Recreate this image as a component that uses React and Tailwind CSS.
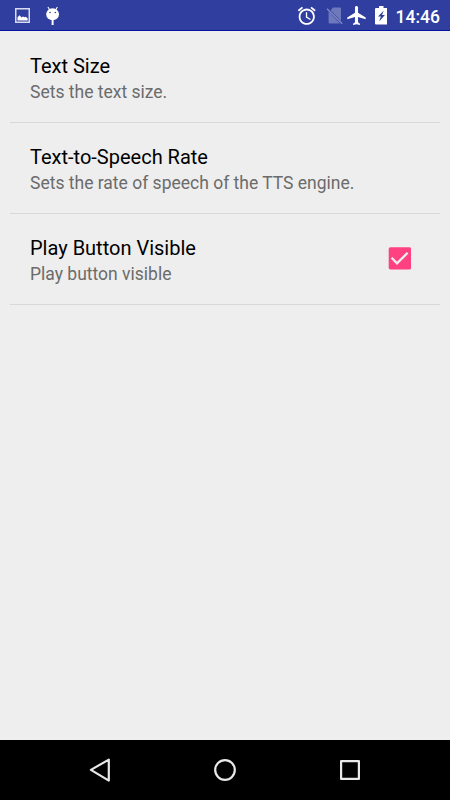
const PREFERENCES = [
  { title: 'Text Size',           summary: 'Sets the text size.' },
  { title: 'Text-to-Speech Rate', summary: 'Sets the rate of speech of the TTS engine.' },
  { title: 'Play Button Visible', summary: 'Play button visible', checked: true },
]

function StatusBar() {
  return (
    <div className="h-[31px] shrink-0 flex items-center justify-between bg-[#303f9f] border-b border-[#0512a0] pl-[15px] pr-[10px] text-white">
      <div className="flex items-center gap-4">
        {/* Screenshot notification */}
        <svg width="15" height="15" viewBox="0 0 15 15" className="mt-px">
          <rect x="0.75" y="0.75" width="13.5" height="13.5" fill="none" stroke="#d9dcf0" strokeWidth="1.5" />
          <path d="M2.5 12.5V9.2L4.6 7.3 6.6 9.4 8 8.6l1.6.6 1.2-.5 1.9 1.8v2z" fill="#fff" />
        </svg>
        {/* Debug notification */}
        <svg width="14" height="20" viewBox="0 0 14 20" className="mt-px">
          <path d="M1.9 1 3.8 4M11.4 1 9.6 4" stroke="#fff" strokeWidth="1.1" />
          <ellipse cx="6.6" cy="8.3" rx="6.4" ry="6" fill="#fff" />
          <path d="M6.6 13v6" stroke="#fff" strokeWidth="2" />
          <circle cx="4" cy="6.5" r=".8" fill="#303f9f" />
          <circle cx="9.3" cy="6.5" r=".8" fill="#303f9f" />
        </svg>
      </div>

      <div className="flex items-center">
        <svg width="21.5" height="21.5" viewBox="0 0 24 24" fill="#fff" className="mr-[7.8px] mt-px">
          <path d="M22 5.72l-4.6-3.86-1.29 1.53 4.6 3.86L22 5.72zM7.88 3.39L6.6 1.86 2 5.71l1.29 1.53 4.59-3.85zM12.5 8H11v6l4.75 2.85.75-1.23-4-2.37V8zM12 4c-4.97 0-9 4.03-9 9s4.02 9 9 9c4.97 0 9-4.03 9-9s-4.03-9-9-9zm0 16c-3.87 0-7-3.13-7-7s3.13-7 7-7 7 3.13 7 7-3.13 7-7 7z" />
        </svg>
        <svg width="18" height="18" viewBox="0 0 18 18" className="mr-[.9px] mt-[2px]">
          <path d="M7 .5h7a1 1 0 0 1 1 1v12.6L4.6 3.4zM2.6 4.6 14 16.5H3.8a1.2 1.2 0 0 1-1.2-1.2z" fill="#fff" fillOpacity=".3" />
          <path d="M1 1.8 16.2 16.8" stroke="#fff" strokeOpacity=".4" strokeWidth="1.2" />
        </svg>
        <svg width="23" height="23" viewBox="0 0 24 24" fill="#fff" className="mt-px">
          <path d="M21.6 16v-2l-8-5V3.5c0-.83-.77-1.5-1.6-1.5s-1.6.67-1.6 1.5V9l-8 5v2l8-2.5V19l-2 1.5V22l3.6-1 3.6 1v-1.5l-2-1.5v-5.5l8 2.5z" />
        </svg>
        <svg width="12.5" height="18.5" viewBox="0 0 12.5 18.5" className="ml-[7px] mr-[8.5px] mt-px">
          <path d="M4 0h4.5v2h3a1 1 0 0 1 1 1v14.5a1 1 0 0 1-1 1H1a1 1 0 0 1-1-1V3a1 1 0 0 1 1-1h3z" fill="#fff" />
          <path d="M8.8 4.6 3 10.6h2.9L4.2 15.4 9.9 9H7z" fill="#303f9f" />
        </svg>
        <span className="text-[17.5px] leading-5 font-medium mt-[4px]">14:46</span>
      </div>
    </div>
  )
}

function Checkbox() {
  return (
    <svg width="23" height="23" viewBox="0 0 23 23" className="mr-[9px] mb-px">
      <rect x=".7" y=".2" width="22.4" height="22.4" rx="1.8" fill="#ff4081" />
      <path d="M3.6 10.8 9 16.4 19.6 5.8" fill="none" stroke="#eee" strokeWidth="2.3" />
    </svg>
  )
}

function NavigationBar() {
  return (
    <div className="h-[60px] shrink-0 bg-black flex items-center justify-between px-[85px]">
      <svg width="30" height="30" viewBox="0 0 30 30" fill="none" stroke="#e8e8e8" strokeWidth="2.2" strokeLinejoin="round">
        <path d="M23.8 4.6v21L5.9 14.9z" />
      </svg>
      <svg width="30" height="30" viewBox="0 0 30 30" fill="none" stroke="#e8e8e8" strokeWidth="2.2">
        <circle cx="15" cy="15" r="9.8" />
      </svg>
      <svg width="30" height="30" viewBox="0 0 30 30" fill="none" stroke="#e8e8e8" strokeWidth="2.2" strokeLinejoin="round">
        <rect x="6.1" y="6.1" width="17.8" height="17.8" />
      </svg>
    </div>
  )
}

export default function App() {
  return (
    <div className="h-screen w-full flex flex-col overflow-hidden bg-[#eeeeee] font-['Roboto',sans-serif]">
      <StatusBar />
      <main className="flex-1 px-[10px] pt-px">
        {PREFERENCES.map(p => (
          <div key={p.title} className="h-[91px] flex items-center justify-between px-5 border-b border-[#d8d8d8]">
            <div className="pt-[3px]">
              <div className="text-[20px] leading-[26px] text-black">{p.title}</div>
              <div className="mt-px text-[17.5px] leading-6 text-[#6b6b6b]">{p.summary}</div>
            </div>
            {p.checked && <Checkbox />}
          </div>
        ))}
      </main>
      <NavigationBar />
    </div>
  )
}
